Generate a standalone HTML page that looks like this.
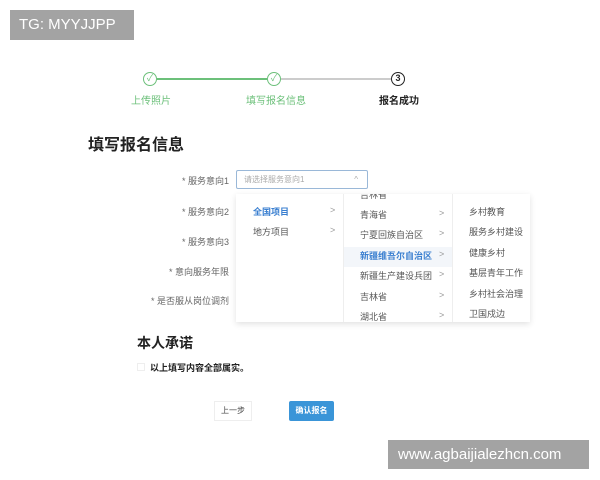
<!DOCTYPE html>
<html><head><meta charset="utf-8"><style>
*{margin:0;padding:0;box-sizing:border-box}
body{width:600px;height:480px;background:#fff;position:relative;overflow:hidden;font-family:"Liberation Sans","Noto Sans CJK SC",sans-serif;color:#555}
.a{position:absolute;white-space:nowrap}
.c{position:absolute;width:14px;height:14px;border-radius:50%;border:1.5px solid #6cc07a;top:72px;font-size:9px;color:#6cc07a;text-align:center;line-height:11px}
.lbl{font-size:9px;color:#666;text-align:right;width:120px;left:109px}
.it{font-size:9px;color:#555}
.ar{font-size:9px;color:#999}
</style></head><body>
<div class="a" style="left:10px;top:10px;width:124px;height:30px;background:#a3a3a3;color:#fff;font-size:15px;line-height:30px;padding-left:9px">TG: MYYJJPP</div>

<div class="a" style="left:157px;top:78px;width:110px;height:2px;background:#6cc07a"></div>
<div class="a" style="left:281px;top:78px;width:110px;height:2px;background:#ccc"></div>
<div class="c" style="left:143px">✓</div>
<div class="c" style="left:267px">✓</div>
<div class="c" style="left:391px;border-color:#222;color:#222;font-weight:bold">3</div>
<div class="a" style="left:131px;top:92px;font-size:10px;color:#6cc07a">上传照片</div>
<div class="a" style="left:246px;top:92px;font-size:10px;color:#6cc07a">填写报名信息</div>
<div class="a" style="left:379px;top:92px;font-size:10px;color:#222;font-weight:bold">报名成功</div>

<div class="a" style="left:88px;top:131px;font-size:16px;font-weight:bold;color:#222">填写报名信息</div>

<div class="a lbl" style="top:174px">* 服务意向1</div>
<div class="a" style="left:236px;top:170px;width:132px;height:19px;border:1px solid #9ab8d8;border-radius:2px;font-size:8px;color:#aaa;line-height:17px;padding-left:7px">请选择服务意向1<span style="position:absolute;right:9px;color:#aaa">^</span></div>
<div class="a lbl" style="top:205px">* 服务意向2</div>
<div class="a lbl" style="top:235px">* 服务意向3</div>
<div class="a lbl" style="top:265px">* 意向服务年限</div>
<div class="a lbl" style="top:294px">* 是否服从岗位调剂</div>

<div class="a" style="left:236px;top:194px;width:294px;height:128px;background:#fff;box-shadow:0 2px 6px rgba(0,0,0,.12);overflow:hidden">
 <div class="a" style="left:107px;top:0;width:1px;height:128px;background:#eee"></div>
 <div class="a" style="left:216px;top:0;width:1px;height:128px;background:#eee"></div>
 <div class="a it" style="left:17px;top:11px;color:#3a7fd0;font-weight:bold">全国项目</div><div class="a ar" style="left:94px;top:11px">&gt;</div>
 <div class="a it" style="left:17px;top:31px">地方项目</div><div class="a ar" style="left:94px;top:31px">&gt;</div>
 <div class="a" style="left:108px;top:53px;width:108px;height:20px;background:#f3f6fa"></div>
 <div class="a it" style="left:124px;top:-6px">吉林省</div>
 <div class="a it" style="left:124px;top:14px">青海省</div><div class="a ar" style="left:203px;top:14px">&gt;</div>
 <div class="a it" style="left:124px;top:34px">宁夏回族自治区</div><div class="a ar" style="left:203px;top:34px">&gt;</div>
 <div class="a it" style="left:124px;top:55px;color:#3a7fd0;font-weight:bold">新疆维吾尔自治区</div><div class="a ar" style="left:203px;top:55px">&gt;</div>
 <div class="a it" style="left:124px;top:75px">新疆生产建设兵团</div><div class="a ar" style="left:203px;top:75px">&gt;</div>
 <div class="a it" style="left:124px;top:96px">吉林省</div><div class="a ar" style="left:203px;top:96px">&gt;</div>
 <div class="a it" style="left:124px;top:116px">湖北省</div><div class="a ar" style="left:203px;top:116px">&gt;</div>
 <div class="a it" style="left:233px;top:11px">乡村教育</div>
 <div class="a it" style="left:233px;top:31px">服务乡村建设</div>
 <div class="a it" style="left:233px;top:52px">健康乡村</div>
 <div class="a it" style="left:233px;top:72px">基层青年工作</div>
 <div class="a it" style="left:233px;top:93px">乡村社会治理</div>
 <div class="a it" style="left:233px;top:113px">卫国戍边</div>
</div>

<div class="a" style="left:137px;top:333px;font-size:14px;font-weight:bold;color:#222">本人承诺</div>
<div class="a" style="left:137px;top:363px;width:8px;height:8px;border:1px solid #eee"></div>
<div class="a" style="left:150px;top:361px;font-size:9px;font-weight:bold;color:#222">以上填写内容全部属实。</div>

<div class="a" style="left:214px;top:401px;width:38px;height:20px;border:1px solid #eee;font-size:8px;color:#444;text-align:center;line-height:18px">上一步</div>
<div class="a" style="left:289px;top:401px;width:45px;height:20px;background:#3a95d8;border-radius:2px;font-size:8px;color:#fff;font-weight:bold;text-align:center;line-height:20px">确认报名</div>

<div class="a" style="left:388px;top:440px;width:201px;height:29px;background:#a3a3a3;color:#fff;font-size:15px;line-height:29px;padding-left:10px">www.agbaijialezhcn.com</div>
</body></html>
